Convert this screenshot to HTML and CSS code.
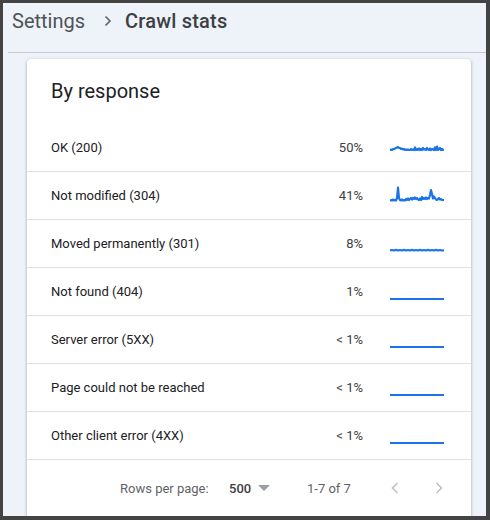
FILE: index.html
```html
<!DOCTYPE html>
<html>
<head>
<meta charset="utf-8">
<link rel="stylesheet" href="styles.css">
</head>
<body>
<div class="app">
  <header class="header">
    <span class="crumb">Settings</span>
    <svg class="sep" width="10" height="12" viewBox="0 0 10 12"><path d="M2.5 1.5 L7 6 L2.5 10.5" fill="none" stroke="#5f6368" stroke-width="1.6"/></svg>
    <span class="current">Crawl stats</span>
  </header>
  <div class="rule"></div>
  <section class="card">
    <h2 class="title">By response</h2>
    <div class="rows">
      <div class="row"><span class="label">OK (200)</span><span class="pct">50%</span>
        <svg class="spark" width="54" height="20" viewBox="0 0 54 20"><polyline points="0,12.5 1,11.5 2,12 3,11 4,11 5,10.5 6,10 7,9.5 8,9 9,10 10,10 11,11 12,10.5 13,11.5 14,11 15,12 16,11.5 17,12 18,11.5 19,12 20,12 21,11 22,12 23,11.5 24,12 25,9.5 26,12 27,11 28,12 29,10.5 30,12 31,11 32,12 33,10 34,11.5 35,11 36,12 37,10 38,11.5 39,12 40,10.5 41,12 42,11 43,11.5 44,12 45,9.5 46,12 47,8.5 48,12 49,11 50,10 51,12 52,11 53,12 54,11.5" fill="none" stroke="#1a73e8" stroke-width="2.2" stroke-linejoin="round"/></svg></div>
      <div class="row"><span class="label">Not modified (304)</span><span class="pct">41%</span>
        <svg class="spark" width="54" height="20" viewBox="0 0 54 20"><polyline points="0,15 1,14 2,14.5 3,13.5 4,14.5 5,14 6,14.5 7,12 8,1.5 9,12 10,14 11,14.5 12,13.5 13,14.5 14,14 15,14.5 16,13 17,14 18,12.5 19,14 20,13 21,12 22,13.5 23,12 24,13 25,11.5 26,13 27,12 28,13.5 29,14 30,12.5 31,14 32,11 33,13 34,12 35,13 36,11.5 37,13 38,12 39,12.5 40,9 41,4 42,8 43,12.5 44,10.5 45,12 46,13.5 47,14 48,13 49,12 50,13.5 51,13 52,14 54,14" fill="none" stroke="#1a73e8" stroke-width="2.2" stroke-linejoin="round"/></svg></div>
      <div class="row"><span class="label">Moved permanently (301)</span><span class="pct">8%</span>
        <svg class="spark" width="54" height="20" viewBox="0 0 54 20"><polyline points="0,16.5 2,16 4,16.5 6,15.8 8,16.5 10,16 12,16.5 14,15.8 16,16.5 18,16 20,16.5 22,15.8 24,16.5 26,16 28,16.5 30,15.8 32,16.5 34,16 36,16.5 38,15.8 40,16.5 42,16 44,16.5 46,15.8 48,16.5 50,16 52,16.5 54,16.3" fill="none" stroke="#1a73e8" stroke-width="2.2" stroke-linejoin="round"/></svg></div>
      <div class="row"><span class="label">Not found (404)</span><span class="pct">1%</span>
        <svg class="spark" width="54" height="20" viewBox="0 0 54 20"><polyline points="0,17 54,17" fill="none" stroke="#1a73e8" stroke-width="2"/></svg></div>
      <div class="row"><span class="label">Server error (5XX)</span><span class="pct">&lt; 1%</span>
        <svg class="spark" width="54" height="20" viewBox="0 0 54 20"><polyline points="0,17 54,17" fill="none" stroke="#1a73e8" stroke-width="2"/></svg></div>
      <div class="row"><span class="label">Page could not be reached</span><span class="pct">&lt; 1%</span>
        <svg class="spark" width="54" height="20" viewBox="0 0 54 20"><polyline points="0,17 54,17" fill="none" stroke="#1a73e8" stroke-width="2"/></svg></div>
      <div class="row"><span class="label">Other client error (4XX)</span><span class="pct">&lt; 1%</span>
        <svg class="spark" width="54" height="20" viewBox="0 0 54 20"><polyline points="0,17 54,17" fill="none" stroke="#1a73e8" stroke-width="2"/></svg></div>
    </div>
    <div class="footer">
      <span class="rpp">Rows per page:</span>
      <span class="select">500
        <svg class="caret" width="12" height="6" viewBox="0 0 12 6"><path d="M0 0 L12 0 L6 6 Z" fill="#9aa0a6"/></svg>
      </span>
      <span class="range">1-7 of 7</span>
      <svg class="nav prev" width="8" height="12" viewBox="0 0 8 12"><path d="M6.5 1 L1.5 6 L6.5 11" fill="none" stroke="#bdc1c6" stroke-width="1.6"/></svg>
      <svg class="nav next" width="8" height="12" viewBox="0 0 8 12"><path d="M1.5 1 L6.5 6 L1.5 11" fill="none" stroke="#bdc1c6" stroke-width="1.6"/></svg>
    </div>
  </section>
</div>
</body>
</html>
```

FILE: styles.css
```css
html, body {
  margin: 0;
  padding: 0;
  background: #434343;
  height: 520px;
  overflow: hidden;
}

.app {
  margin: 3px 4px 0 3px;
  height: 513px;
  background: #eef2f9;
  overflow: hidden;
  font-family: Roboto, "Liberation Sans", sans-serif;
}

.header {
  height: 36px;
  padding: 0 0 0 9px;
  display: flex;
  align-items: center;
  font-size: 20px;
  margin-bottom: 13px;
}

.crumb {
  color: #4f5357;
}

.sep {
  margin: 0 12px 0 18px;
}

.current {
  color: #3c4043;
  font-weight: 500;
  letter-spacing: 0.2px;
}

.rule {
  height: 1px;
  background: #c7c9cc;
  margin-left: 5px;
}

.card {
  margin: 6px 0 0 24px;
  width: 444px;
  background: #fff;
  border-radius: 4px;
  box-shadow: 0 1px 2px rgba(60, 64, 67, 0.3), 0 1px 3px 1px rgba(60, 64, 67, 0.15);
  height: 470px;
}

.title {
  margin: 0;
  padding: 18px 24px 0;
  font-size: 20px;
  line-height: 28px;
  font-weight: 400;
  color: #202124;
}

.rows {
  margin-top: 19px;
}

.row {
  height: 47px;
  border-bottom: 1px solid #e0e0e0;
  display: flex;
  align-items: center;
  padding: 0 27px 0 24px;
  font-size: 13px;
  color: #202124;
}

.label {
  flex: 1;
}

.pct {
  color: #3c4043;
  text-align: right;
}

.spark {
  margin-left: 27px;
  display: block;
}

.footer {
  height: 56px;
  display: flex;
  align-items: center;
  padding-left: 93px;
  font-size: 13px;
  color: #5f6368;
}

.rpp {
  width: 109px;
}

.select {
  display: flex;
  align-items: center;
  color: #3c4043;
  font-weight: 500;
  width: 78px;
}

.caret {
  margin-left: 7px;
}

.range {
  width: 84px;
}

.nav {
  display: block;
}

.prev {
  margin-right: 36px;
}
```
